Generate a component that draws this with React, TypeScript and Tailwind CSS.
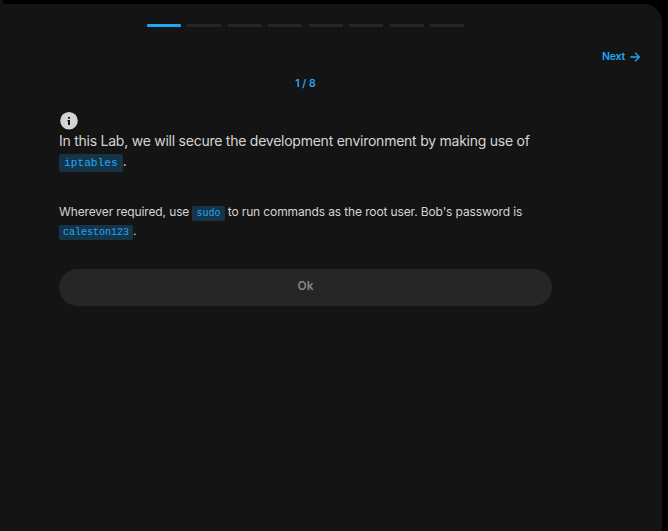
import React from "react";

const steps = [1, 2, 3, 4, 5, 6, 7, 8];

function InfoIcon() {
  return (
    <svg className="ml-px block h-[18px] w-[18px]" viewBox="0 0 18 18" fill="none">
      <circle cx="9" cy="8.8" r="8.8" fill="#d4d4d4" />
      <rect x="8" y="5" width="2" height="1.7" fill="#141414" />
      <path d="M7.5 8H10v5H8V9.2h-.5z" fill="#141414" />
    </svg>
  );
}

function ArrowIcon() {
  return (
    <svg className="h-[10px] w-[10px]" viewBox="0 0 10 10" fill="none" stroke="#20a8f8" strokeWidth="1.3">
      <path d="M0.3 5h9M5.2 0.8 9.4 5 5.2 9.2" />
    </svg>
  );
}

export default function App() {
  return (
    <div className="h-[531px] w-[668px] overflow-hidden bg-black font-['Inter',sans-serif] text-[#d4d4d4]">
      <div className="h-1 w-[3px] bg-[#141414]" />
      <main className="flex h-[527px] w-[662px] flex-col rounded-tr-[18px] bg-[#141414]">
        <div className="ml-[147px] mt-5 flex w-[317px] justify-between">
          {steps.map((step) => (
            <span key={step} className={`h-[3px] w-[34px] rounded-[1px] ${step === 1 ? "bg-[#20a8f8]" : "bg-[#262626]"}`} />
          ))}
        </div>
        <button className="mr-[22px] mt-[22px] flex h-4 items-center gap-[5px] self-end text-[10.5px] font-semibold leading-4 tracking-[-0.2px] text-[#20a8f8]">
          Next
          <ArrowIcon />
        </button>
        <section className="ml-[59px] w-[493px]">
          <p className="mt-[11px] text-center text-[10.5px] font-semibold leading-4 text-[#20a8f8]">1 / 8</p>
          <div className="mt-[20px]">
            <InfoIcon />
          </div>
          <p className="mt-px text-[14px] leading-[20px] tracking-[-0.245px]">
            In this Lab, we will secure the development environment by making use of{" "}
            <code className="rounded-[2px] bg-[#153448] px-[5px] py-[3px] font-['Liberation_Mono',monospace] text-[11.2px] leading-none tracking-normal text-[#20a8f8]">iptables</code>.
          </p>
          <p className="mt-[31px] text-[12px] leading-[19px] tracking-[-0.125px]">
            Wherever required, use{" "}
            <code className="rounded-[2px] bg-[#153448] px-1 py-[2px] font-['Liberation_Mono',monospace] text-[10px] leading-none tracking-normal text-[#20a8f8]">sudo</code>{" "}
            to run commands as the root user. Bob's password is{" "}
            <code className="rounded-[2px] bg-[#153448] px-1 py-[2px] font-['Liberation_Mono',monospace] text-[10px] leading-none tracking-normal text-[#20a8f8]">caleston123</code>.
          </p>
          <button className="mt-[29px] block h-[37px] w-full rounded-full bg-[#262626] pb-[3px] text-[12px] font-semibold text-[#858585]">
            Ok
          </button>
        </section>
      </main>
    </div>
  );
}
